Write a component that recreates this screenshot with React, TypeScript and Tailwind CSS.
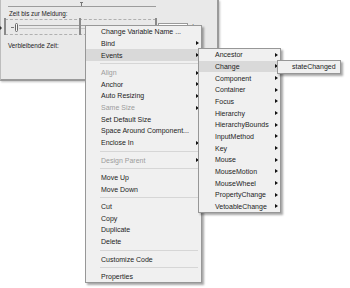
import React from "react";

type Item = { label?: string; sub?: boolean; disabled?: boolean; active?: boolean; sep?: boolean };

const mainItems: Item[] = [
  { label: "Change Variable Name ..." },
  { label: "Bind", sub: true },
  { label: "Events", sub: true, active: true },
  { sep: true },
  { label: "Align", sub: true, disabled: true },
  { label: "Anchor", sub: true },
  { label: "Auto Resizing", sub: true },
  { label: "Same Size", sub: true, disabled: true },
  { label: "Set Default Size" },
  { label: "Space Around Component..." },
  { label: "Enclose In", sub: true },
  { sep: true },
  { label: "Design Parent", sub: true, disabled: true },
  { sep: true },
  { label: "Move Up" },
  { label: "Move Down" },
  { sep: true },
  { label: "Cut" },
  { label: "Copy" },
  { label: "Duplicate" },
  { label: "Delete" },
  { sep: true },
  { label: "Customize Code" },
  { sep: true },
  { label: "Properties" },
];

const eventItems: Item[] = [
  { label: "Ancestor", sub: true },
  { label: "Change", sub: true, active: true },
  { label: "Component", sub: true },
  { label: "Container", sub: true },
  { label: "Focus", sub: true },
  { label: "Hierarchy", sub: true },
  { label: "HierarchyBounds", sub: true },
  { label: "InputMethod", sub: true },
  { label: "Key", sub: true },
  { label: "Mouse", sub: true },
  { label: "MouseMotion", sub: true },
  { label: "MouseWheel", sub: true },
  { label: "PropertyChange", sub: true },
  { label: "VetoableChange", sub: true },
];

function Arrow() {
  return (
    <span className="w-0 h-0 border-y-[2px] border-y-transparent border-l-[3px] border-l-[#111]" />
  );
}

function Menu({ items, pl }: { items: Item[]; pl: string }) {
  return (
    <div className="flex flex-col">
      {items.map((it, i) =>
        it.sep ? (
          <div key={i} className="h-[5.83px] flex items-center pl-[14px] pr-[3px]">
            <div className="w-full h-[1px] bg-[#d6d6d6]" />
          </div>
        ) : (
          <div
            key={i}
            className={
              "h-[11.67px] flex items-center justify-between pr-[2px] " +
              pl +
              (it.active ? " bg-[#d9d9d9]" : "") +
              (it.disabled ? " text-[#9c9c9c]" : " text-[#1c1c1c]")
            }
          >
            <span className="leading-none whitespace-nowrap">{it.label}</span>
            {it.sub ? <Arrow /> : null}
          </div>
        )
      )}
    </div>
  );
}

function Handle() {
  return <span className="w-[3px] h-[3px] bg-white border border-[#8a8a8a]" />;
}

export default function App() {
  return (
    <div className="relative w-[350px] h-[288px] bg-white overflow-hidden font-['Liberation_Sans',Arial,sans-serif] text-[7px]">
      {/* designer panel */}
      <div className="w-[219px] h-[81px] bg-[#e9e9e9] border-l border-r-2 border-b-2 border-l-[#bdbdbd] border-r-[#9a9a9a] border-b-[#9a9a9a] shadow-[1px_1px_2px_rgba(0,0,0,0.25)] flex flex-col pl-[7px] pt-[2px]">
        <div className="relative w-[148px] h-[5px]">
          <div className="absolute left-[72px] top-0 w-[3px] h-[4px] flex flex-col items-center">
            <div className="w-[3px] h-[1px] bg-[#777]" />
            <div className="w-[1px] h-[3px] bg-[#777]" />
          </div>
          <div className="absolute left-0 right-0 bottom-0 h-[1px] bg-[#9c9c9c]" />
        </div>
        <div className="text-[6.3px] leading-none text-[#222] mt-[4px] pl-[1px]">Zeit bis zur Meldung:</div>
        <div className="relative h-[18px] mt-[1px] -ml-[3px] flex items-center">
          {/* selection box */}
          <div className="relative w-[151px] h-[16px] border border-dashed border-[#b0b0b0] flex items-center pl-[5px]">
            <span className="w-[3px] h-[1px] bg-[#777] mr-[1px]" />
            <span className="w-[3px] h-[9px] rounded-[2px] border border-[#666] bg-[#f7f7f7]" />
            <div className="flex-1 flex flex-col gap-[2px] ml-[1px]">
              <div className="h-[1px] bg-[#a0a0a0]" />
              <div className="h-[1px] bg-[#c4c4c4]" />
            </div>
            <div className="absolute -left-[2px] -top-[2px]"><Handle /></div>
            <div className="absolute left-[73px] -top-[2px]"><Handle /></div>
            <div className="absolute -right-[2px] -top-[2px]"><Handle /></div>
            <div className="absolute -left-[2px] top-[5px]"><Handle /></div>
            <div className="absolute -left-[2px] -bottom-[2px]"><Handle /></div>
            <div className="absolute left-[73px] -bottom-[2px]"><Handle /></div>
            <div className="absolute -right-[2px] -bottom-[2px]"><Handle /></div>
            <div className="absolute -left-[6px] top-[6px] w-0 h-0 border-y-[2px] border-y-transparent border-l-[2px] border-l-[#333]" />
          </div>
          <div className="w-[30px] h-[6px] bg-white border border-[#9a9a9a] ml-[2px] -mt-[3px]" />
          <span className="text-[6.3px] leading-none text-[#222] ml-[1px]">sten</span>
        </div>
        <div className="text-[6.3px] leading-none text-[#222] mt-[7px]">Verbleibende Zeit:</div>
      </div>

      {/* main context menu */}
      <div className="absolute left-[85px] top-[25px] w-[117px] bg-[#f0f0f0] border border-[#979797] shadow-[2px_2px_2px_rgba(0,0,0,0.35)]">
        <Menu items={mainItems} pl="pl-[15px]" />
      </div>

      {/* events submenu */}
      <div className="absolute left-[198px] top-[48px] w-[83px] bg-[#f0f0f0] border border-[#979797] shadow-[2px_2px_2px_rgba(0,0,0,0.35)]">
        <Menu items={eventItems} pl="pl-[16px]" />
      </div>

      {/* change submenu */}
      <div className="absolute left-[277px] top-[60px] w-[64px] bg-[#f0f0f0] border border-[#979797] shadow-[2px_2px_2px_rgba(0,0,0,0.35)]">
        <Menu items={[{ label: "stateChanged" }]} pl="pl-[14px]" />
      </div>
    </div>
  );
}
